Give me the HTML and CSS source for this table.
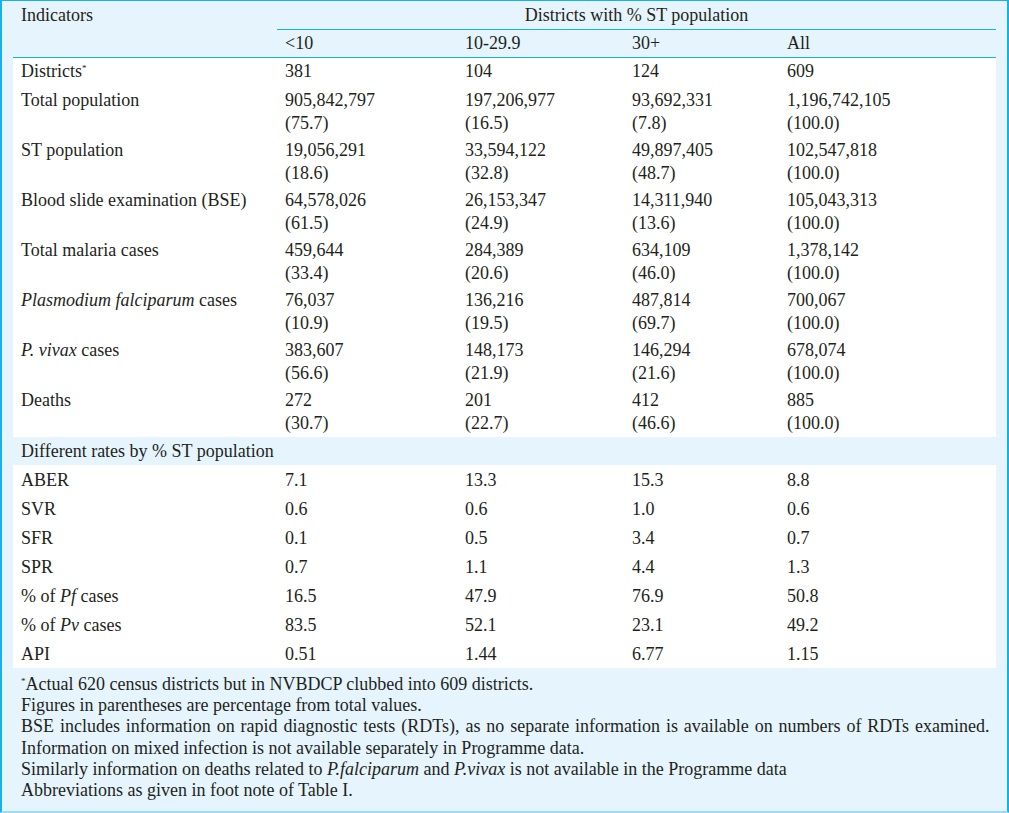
FILE: index.html
```html
<!DOCTYPE html>
<html>
<head>
<meta charset="utf-8">
<link rel="stylesheet" href="styles.css">
</head>
<body>
<div class="frame">
  <table class="data">
    <colgroup>
      <col class="c1"><col class="c2"><col class="c3"><col class="c4"><col class="c5">
    </colgroup>
    <thead>
      <tr class="h1">
        <th class="ind" rowspan="2">Indicators</th>
        <th class="span" colspan="4">Districts with % ST population</th>
      </tr>
      <tr class="h2">
        <th>&lt;10</th><th>10-29.9</th><th>30+</th><th>All</th>
      </tr>
    </thead>
    <tbody>
      <tr class="first"><td>Districts<sup>*</sup></td><td>381</td><td>104</td><td>124</td><td>609</td></tr>
      <tr class="dbl"><td>Total population</td><td>905,842,797<br>(75.7)</td><td>197,206,977<br>(16.5)</td><td>93,692,331<br>(7.8)</td><td>1,196,742,105<br>(100.0)</td></tr>
      <tr class="dbl"><td>ST population</td><td>19,056,291<br>(18.6)</td><td>33,594,122<br>(32.8)</td><td>49,897,405<br>(48.7)</td><td>102,547,818<br>(100.0)</td></tr>
      <tr class="dbl"><td>Blood slide examination (BSE)</td><td>64,578,026<br>(61.5)</td><td>26,153,347<br>(24.9)</td><td>14,311,940<br>(13.6)</td><td>105,043,313<br>(100.0)</td></tr>
      <tr class="dbl"><td>Total malaria cases</td><td>459,644<br>(33.4)</td><td>284,389<br>(20.6)</td><td>634,109<br>(46.0)</td><td>1,378,142<br>(100.0)</td></tr>
      <tr class="dbl"><td><i>Plasmodium falciparum</i> cases</td><td>76,037<br>(10.9)</td><td>136,216<br>(19.5)</td><td>487,814<br>(69.7)</td><td>700,067<br>(100.0)</td></tr>
      <tr class="dbl"><td><i>P. vivax</i> cases</td><td>383,607<br>(56.6)</td><td>148,173<br>(21.9)</td><td>146,294<br>(21.6)</td><td>678,074<br>(100.0)</td></tr>
      <tr class="dbl"><td>Deaths</td><td>272<br>(30.7)</td><td>201<br>(22.7)</td><td>412<br>(46.6)</td><td>885<br>(100.0)</td></tr>
      <tr class="section"><td colspan="5">Different rates by % ST population</td></tr>
      <tr class="rate"><td>ABER</td><td>7.1</td><td>13.3</td><td>15.3</td><td>8.8</td></tr>
      <tr class="rate"><td>SVR</td><td>0.6</td><td>0.6</td><td>1.0</td><td>0.6</td></tr>
      <tr class="rate"><td>SFR</td><td>0.1</td><td>0.5</td><td>3.4</td><td>0.7</td></tr>
      <tr class="rate"><td>SPR</td><td>0.7</td><td>1.1</td><td>4.4</td><td>1.3</td></tr>
      <tr class="rate"><td>% of <i>Pf</i> cases</td><td>16.5</td><td>47.9</td><td>76.9</td><td>50.8</td></tr>
      <tr class="rate"><td>% of <i>Pv</i> cases</td><td>83.5</td><td>52.1</td><td>23.1</td><td>49.2</td></tr>
      <tr class="rate"><td>API</td><td>0.51</td><td>1.44</td><td>6.77</td><td>1.15</td></tr>
    </tbody>
  </table>
  <div class="notes">
    <p><sup>*</sup>Actual 620 census districts but in NVBDCP clubbed into 609 districts.</p>
    <p>Figures in parentheses are percentage from total values.</p>
    <p class="wide">BSE includes information on rapid diagnostic tests (RDTs), as no separate information is available on numbers of RDTs examined.</p>
    <p>Information on mixed infection is not available separately in Programme data.</p>
    <p>Similarly information on deaths related to <i>P.falciparum</i> and <i>P.vivax</i> is not available in the Programme data</p>
    <p>Abbreviations as given in foot note of Table I.</p>
  </div>
</div>
</body>
</html>
```
FILE: styles.css
```css
html, body {
  margin: 0;
  padding: 0;
  background: #e6f5fd;
}
body {
  font-family: "Liberation Serif", "Times New Roman", serif;
  font-size: 18px;
  color: #231f20;
}
.frame {
  box-sizing: border-box;
  width: 1009px;
  height: 813px;
  border-left: 2px solid #14b1ea;
  border-top: 1px solid #14b1ea;
  border-right: 2px solid #14b1ea;
  border-bottom: 2px solid #9fdaf3;
  padding: 0 11px;
  background: #e6f5fd;
}
.data {
  width: 983px;
  border-collapse: collapse;
  table-layout: fixed;
}
.c1 { width: 264px; }
.c2 { width: 180px; }
.c3 { width: 167px; }
.c4 { width: 155px; }
.c5 { width: 217px; }
th, td {
  padding: 0 8px;
  text-align: left;
  font-weight: normal;
  vertical-align: top;
  white-space: nowrap;
}
thead th {
  background: #e6f5fd;
}
.h1 th {
  height: 28px;
  line-height: 28px;
  padding-top: 0;
  padding-bottom: 0;
}
.h1 th.ind {
  vertical-align: top;
  border-bottom: 1px solid #14b1ea;
}
.h1 th.span {
  text-align: center;
  border-bottom: 1px solid #14b1ea;
}
.h2 th {
  height: 27px;
  line-height: 27px;
  border-bottom: 1px solid #14b1ea;
}
tbody td {
  background: #fff;
  line-height: 23px;
}
tr.first td {
  padding-top: 2px;
  padding-bottom: 4px;
}
tr.dbl td {
  padding-top: 2px;
  padding-bottom: 2px;
}
tr.section td {
  background: #e6f5fd;
  padding-top: 3px;
  padding-bottom: 2px;
}
tr.rate td {
  padding-top: 4px;
  padding-bottom: 2px;
}
sup {
  font-size: 9px;
  line-height: 0;
  vertical-align: 6px;
}
.notes {
  padding: 6px 8px 0;
  line-height: 21.2px;
}
.notes p {
  margin: 0;
  white-space: nowrap;
}
.notes p.wide {
  word-spacing: 1.4px;
}
```
